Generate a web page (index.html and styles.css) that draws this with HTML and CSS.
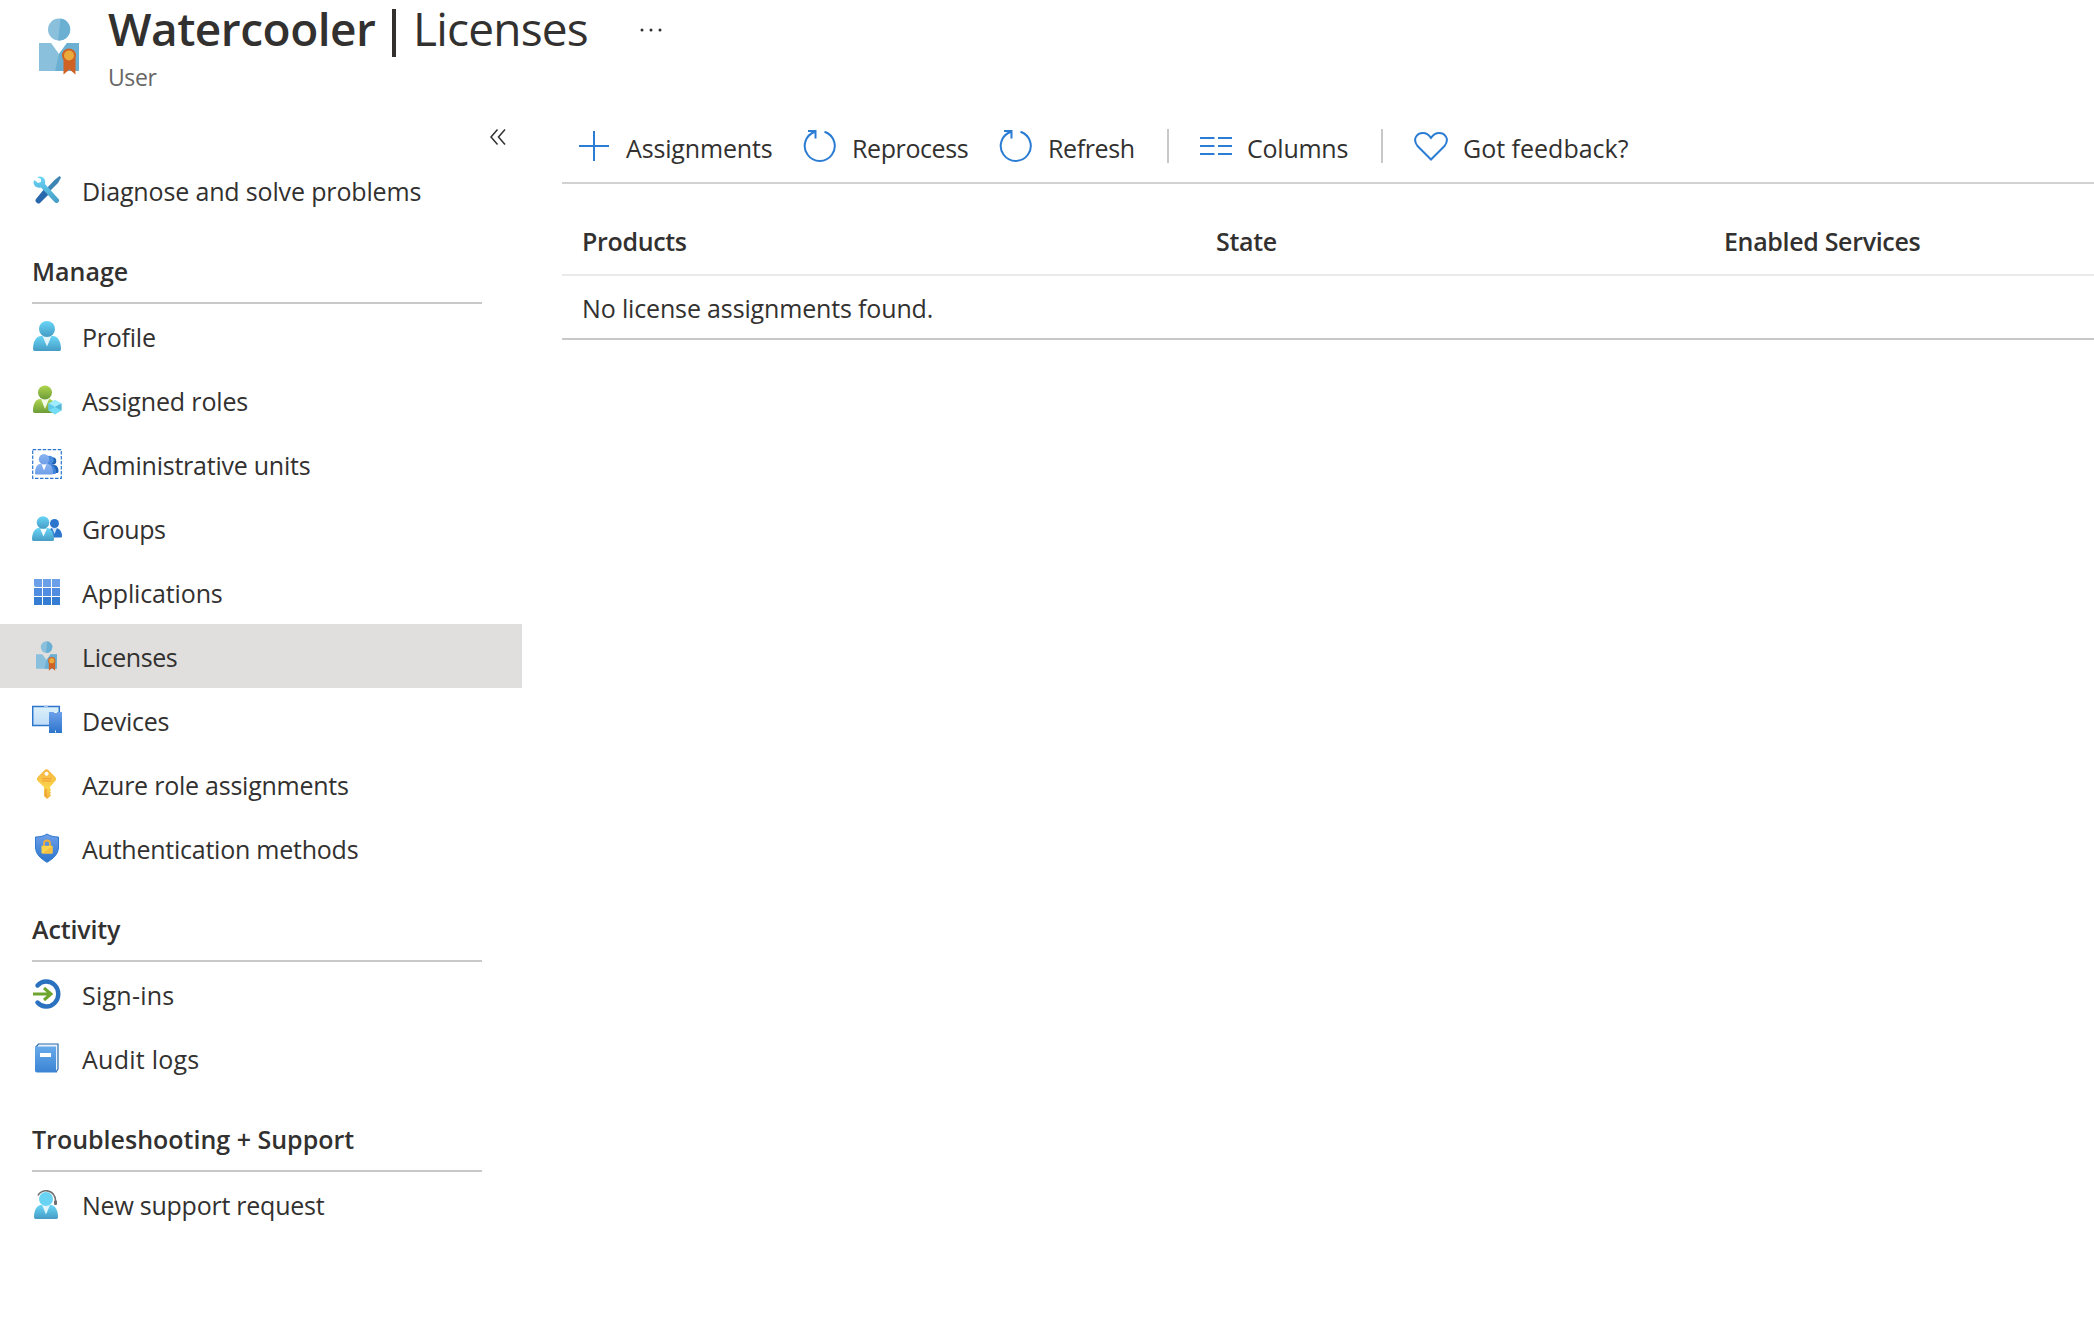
FILE: index.html
```html
<!DOCTYPE html>
<html lang="en">
<head>
<meta charset="utf-8">
<title>Watercooler | Licenses</title>
<link rel="stylesheet" href="styles.css">
</head>
<body>
<svg class="defs" width="0" height="0">
  <defs>
    <linearGradient id="cyan" x1="0" y1="0" x2="0" y2="1"><stop offset="0" stop-color="#69d6f7"/><stop offset="1" stop-color="#459bc4"/></linearGradient>
    <linearGradient id="green" x1="0" y1="0" x2="0" y2="1"><stop offset="0" stop-color="#afd64f"/><stop offset="1" stop-color="#6c9b38"/></linearGradient>
    <linearGradient id="peri" x1="0" y1="0" x2="0" y2="1"><stop offset="0" stop-color="#8ab4f0"/><stop offset="1" stop-color="#6f9fe8"/></linearGradient>
    <linearGradient id="blue" x1="0" y1="0" x2="0" y2="1"><stop offset="0" stop-color="#6ea0ea"/><stop offset="1" stop-color="#2b75cc"/></linearGradient>
    <linearGradient id="book" x1="0" y1="0" x2="0" y2="1"><stop offset="0" stop-color="#68abeb"/><stop offset="1" stop-color="#3a84d4"/></linearGradient>
    <linearGradient id="gold" x1="0" y1="0" x2="0" y2="1"><stop offset="0" stop-color="#f5b23e"/><stop offset=".6" stop-color="#fad44c"/><stop offset="1" stop-color="#f2ae3c"/></linearGradient>
    <linearGradient id="screen" x1="0" y1="0" x2="0" y2="1"><stop offset="0" stop-color="#dcf1fa"/><stop offset="1" stop-color="#bfdcf7"/></linearGradient>
    <symbol id="license" viewBox="0 0 40 57">
      <ellipse cx="20" cy="11.500" rx="11" ry="11" fill="#8ac0dc"/>
      <path d="M21.500 .6a11 11 0 0 1-2.500 21.900z" fill="#6bb0d3"/>
      <path d="M0 25h12l8 11 8-11h12v28H0z" fill="#8ac0dc"/>
      <path d="M20 36l8-11h12v28H16z" fill="#6bb0d3"/>
      <path d="M24.500 40h12v16.500l-6-5-6 5z" fill="#cf6225"/>
      <circle cx="30" cy="37.500" r="7" fill="#cf6225"/><circle cx="30" cy="37.500" r="5" fill="#ebaa3c"/>
    </symbol>
  </defs>
</svg>
<header class="header">
  <svg class="header-icon" width="40" height="57"><use href="#license"/></svg>
  <div class="titles">
    <h1 class="title"><span class="name">Watercooler</span><span class="bar"></span><span class="page">Licenses</span>
      <svg class="dots" width="24" height="6" viewBox="0 0 24 6"><circle cx="3" cy="3" r="1.500"/><circle cx="12" cy="3" r="1.500"/><circle cx="21" cy="3" r="1.500"/></svg></h1>
    <div class="kind"><span>User</span></div>
  </div>
</header>
<div class="body">
  <nav class="sidebar">
    <div class="collapse"><svg width="18" height="18" viewBox="0 0 18 18"><path d="M8.500 1.500L2 9l6.500 7.500M16 1.500L9.500 9l6.500 7.500"/></svg></div>
    <a class="item snug"><svg class="icon" viewBox="0 0 30 30">
      <path d="M27.500 1L29 2.500 26 8l-9 9-3-3 8.500-9z" fill="#3d85b5"/><path d="M13 13l5 5L8 28c-2 2-6-2-4-4z" fill="#2867ab"/>
      <path d="M5 2l3-.5c4 0 6 4 5 7.500l14 15.500c1 2-1.500 4.500-4 3L9 12.500C5 13.500 1.500 11 1.500 7L2.500 5l3.500 3 3-1V4z" fill="url(#cyan)"/></svg><span>Diagnose and solve problems</span></a>
    <h2 class="group"><span>Manage</span></h2>
    <a class="item tight"><svg class="icon" viewBox="0 0 30 30">
      <path d="M1 28c0-7 3-13 8-13h12c5 0 8 6 8 13 0 1.500-1 2-2 2H3c-1 0-2-.5-2-2z" fill="url(#cyan)"/><path d="M10.500 15h9L15 25.500z" fill="#e5f5fc"/><circle cx="15" cy="8" r="8" fill="url(#cyan)"/></svg><span>Profile</span></a>
    <a class="item snug"><svg class="icon" viewBox="0 0 30 30">
      <path d="M1 26c0-7 2.500-12 7-12h9c4 0 7 5 7 12 0 1-.5 2-2 2H3c-1.500 0-2-1-2-2z" fill="url(#green)"/><path d="M9 14h8l-4 10z" fill="#f4fae8"/><circle cx="13" cy="7.500" r="7" fill="url(#green)"/>
      <path d="M23 15l6.500 3.500v7L23 29.500l-6.500-4v-7z" fill="#74dcf5"/><path d="M16.500 18.500L23 15l6.500 3.500L23 22z" fill="#9eebfb"/><path d="M23 22l6.500-3.500v7z" fill="#55b7d8"/><path d="M16.500 18.500v7L23 22z" fill="#5fc8e6"/></svg><span>Assigned roles</span></a>
    <a class="item tight"><svg class="icon" viewBox="0 0 30 30">
      <rect x=".7" y=".7" width="28.600" height="28.600" fill="none" stroke="#2b75cc" stroke-width="1.200" stroke-dasharray="3.500 1.500"/>
      <path d="M13 24c0-5 2-8 5-8h4c3 0 4.500 3 4.500 6 0 1.500-.5 2-1.500 2z" fill="#1f63b5"/><circle cx="20.500" cy="12" r="3.800" fill="#1f63b5"/>
      <path d="M9 25c0-6 2-10 5-10h4c3 0 6 4 6 8 0 1.500-.5 2-1.500 2z" fill="#3f83da"/><circle cx="17.500" cy="11" r="4.300" fill="#4a8cde"/>
      <path d="M3 24c0-5 2-9 5-9h8c3 0 5 4 5 9 0 1-.5 1.500-1.500 1.500h-15C3.500 25.500 3 25 3 24z" fill="url(#peri)"/><path d="M9.500 15h5L12 21.500z" fill="#fff"/><circle cx="12" cy="10.200" r="5.200" fill="url(#peri)"/></svg><span>Administrative units</span></a>
    <a class="item tighter"><svg class="icon" viewBox="0 0 30 30">
      <path d="M16 24c0-5 2-9 4-9h4c3.500 0 6 4 6 8 0 1-.5 1.500-1.500 1.500H17z" fill="#2b75cc"/><path d="M20 15h5l-2.500 6z" fill="#cfe3f7"/><circle cx="22.500" cy="10.500" r="4.500" fill="#2b75cc"/>
      <path d="M0 26c0-6 3-11 6.500-11h9C19 15 22 20 22 26c0 1.500-.5 2-2 2H2c-1.500 0-2-.5-2-2z" fill="url(#cyan)"/><path d="M8 15.500h7l-3.500 8z" fill="#f1fafd"/><circle cx="11" cy="9.500" r="6.300" fill="url(#cyan)"/></svg><span>Groups</span></a>
    <a class="item snug"><svg class="icon" viewBox="0 0 30 30">
      <g fill="#6b9fe8"><path d="M2 2h8v8H4a2 2 0 0 1-2-2z"/><rect x="11" y="2" width="8" height="8"/><rect x="20" y="2" width="8" height="8"/></g>
      <g fill="#508de0"><rect x="2" y="11" width="8" height="8"/><rect x="11" y="11" width="8" height="8"/><rect x="20" y="11" width="8" height="8"/></g>
      <g fill="#347dd2"><rect x="2" y="20" width="8" height="8"/><rect x="11" y="20" width="8" height="8"/><rect x="20" y="20" width="8" height="8"/></g></svg><span>Applications</span></a>
    <a class="item tighter selected"><svg class="icon" viewBox="0 0 30 30"><use href="#license" x="4" y="0" width="21" height="30"/></svg><span>Licenses</span></a>
    <a class="item tight"><svg class="icon" viewBox="0 0 30 30">
      <rect x="0.700" y="1.500" width="26.600" height="19" fill="url(#screen)" stroke="#2b75cc" stroke-width="1.500"/><path d="M12 1.500h4" stroke="#9cc4ee" stroke-width="1.500"/>
      <rect x="17" y="7" width="13" height="21" fill="url(#blue)"/><path d="M22 7.500h3M23.500 25.500v2" stroke="#e5f0fc" stroke-width="1"/></svg><span>Devices</span></a>
    <a class="item tight"><svg class="icon" viewBox="0 0 30 30">
      <path fill-rule="evenodd" d="M13 .8q1.500-1.200 3 0l7.500 7.400q1.200 1.800 0 3.600L18 18v1.500l1 1-1 1.500 1 1.500-1 1.500 1 1.500L15 30l-3-3V18L5.500 11.800q-1.200-1.800 0-3.600zM14.500 2.800a2 2 0 1 0 .1 0z" fill="url(#gold)"/><path d="M10 9.700h9.500M10 12h9.500" stroke="#f19b35" stroke-width="1"/><path d="M13 20v7l1.500 1v-8z" fill="#ef9f38"/></svg><span>Azure role assignments</span></a>
    <a class="item tight"><svg class="icon" viewBox="0 0 30 30">
      <path d="M15 1c3 2 6.500 3 11.500 3v10c0 7-5 11.500-11.500 15.300C8.500 25.500 3.500 21 3.500 14V4C8.500 4 12 3 15 1z" fill="url(#blue)" stroke="#2f79cf" stroke-width="1"/>
      <path d="M12 13V10.500a3 3 0 0 1 6 0V13" fill="none" stroke="#eead3a" stroke-width="1.800"/><rect x="9.500" y="12.800" width="11" height="7.700" rx=".7" fill="#fbd44c"/><path d="M20.500 13v7.500h-10z" fill="#f6bf43"/></svg><span>Authentication methods</span></a>
    <h2 class="group snug"><span>Activity</span></h2>
    <a class="item loose"><svg class="icon" viewBox="0 0 30 30">
      <path d="M5.500 6.500A12 12.500 0 1 1 5.500 23.500" fill="none" stroke="#2a72c0" stroke-width="4.400" stroke-linecap="round"/>
      <path d="M1 15h17M12 9l7 6-7 6" fill="none" stroke="#6ea52e" stroke-width="3"/></svg><span>Sign-ins</span></a>
    <a class="item loose"><svg class="icon" viewBox="0 0 30 30">
      <path d="M4 4L6.500 1H26v25l-2 3z" fill="#e8f3fc" stroke="#2c6ca8" stroke-width="1.200"/><path d="M3 3.500h21V28q0 1.500-1.500 1.500H5q-2 0-2-2z" fill="url(#book)"/><rect x="8" y="10" width="11" height="4" fill="#fff"/></svg><span>Audit logs</span></a>
    <h2 class="group"><span>Troubleshooting + Support</span></h2>
    <a class="item tight"><svg class="icon" viewBox="0 0 30 30">
      <path d="M2 28c0-7 3-12 7-12h10c4 0 7 5 7 12 0 1.500-1 2-2 2H4c-1 0-2-.5-2-2z" fill="url(#cyan)"/><path d="M10 16h8l-4 9.500z" fill="#e0f5fc"/><circle cx="14" cy="10" r="7" fill="#68d3f2"/>
      <path d="M6 6.500C8 .5 23-2 23.800 13" fill="none" stroke="#6f6f73" stroke-width="1.600"/><rect x="22" y="11.500" width="3" height="4.500" rx="1" fill="#6f6f73"/></svg><span>New support request</span></a>
  </nav>
  <main class="content">
    <div class="toolbar">
      <a class="cmd assign snug"><svg width="32" height="34" viewBox="0 0 32 34"><path d="M1 17h30M16 2v30"/></svg><span>Assignments</span></a>
      <a class="cmd reprocess tighter"><svg width="34" height="34" viewBox="0 0 34 34"><path d="M21.500 2.700A15 15 0 1 1 12 2.700M5 2h7.500v7.500"/></svg><span>Reprocess</span></a>
      <a class="cmd refresh tighter"><svg width="34" height="34" viewBox="0 0 34 34"><path d="M21.500 2.700A15 15 0 1 1 12 2.700M5 2h7.500v7.500"/></svg><span>Refresh</span></a>
      <i class="sep"></i>
      <a class="cmd columns tight"><svg width="32" height="34" viewBox="0 0 32 34"><path d="M0 9h14.500M18 9h14M0 17h14.500M18 17h14M0 25h14.500M18 25h14"/></svg><span>Columns</span></a>
      <i class="sep"></i>
      <a class="cmd"><svg width="34" height="34" viewBox="0 0 34 34"><path d="M17 30.500L3.500 17C-2 10 3 4 9 4c4 0 6 2 8 4.800C19 6 21 4 25 4c6 0 11 6 5.500 13z"/></svg><span>Got feedback?</span></a>
    </div>
    <div class="table">
      <div class="row head"><span>Products</span><span>State</span><span>Enabled Services</span></div>
      <div class="row snug"><span>No license assignments found.</span></div>
    </div>
  </main>
</div>
</body>
</html>
```
FILE: styles.css
```css
* { box-sizing: border-box; }
body { margin: 0; background: #fff; color: #323130; font: 25px/34px "Open Sans", "Noto Sans", sans-serif; overflow: hidden; height: 1324px; }
.defs { position: absolute; }

/* letter fitting */
.snug { letter-spacing: -.15px; }
.tight { letter-spacing: -.24px; }
.tighter { letter-spacing: -.4px; }
.loose { letter-spacing: .25px; }

/* header */
.header { display: flex; height: 110px; padding-left: 39px; }
.header-icon { margin-top: 18px; }
.titles { margin-left: 29px; }
.title { display: grid; grid-template-columns: 284px 21px 226px 24px; align-items: center; height: 60px; margin: 0; font-size: 46px; font-weight: 400; line-height: 56px; }
.name, .page { padding-bottom: 4px; }
.name { font-weight: 600; letter-spacing: -.5px; }
.page { letter-spacing: -.8px; }
.bar { width: 4px; height: 48px; margin-top: 6px; background: #323130; }
.dots { fill: #323130; }
.kind { color: #666; font-size: 23px; letter-spacing: -.4px; }

/* sidebar */
.body { display: flex; }
.sidebar { width: 522px; flex: none; }
.collapse { display: flex; justify-content: flex-end; height: 48px; padding: 18px 15px 0 0; }
.collapse path { fill: none; stroke: #323130; stroke-width: 1.500; }
.item { display: flex; align-items: center; height: 64px; padding-left: 32px; }
.item span { margin-left: 20px; padding-top: 1px; }
.selected { background: #e1dfdd; }
.icon { width: 30px; height: 30px; flex: none; }
.group { display: flex; align-items: center; height: 82px; width: 450px; margin: 0 0 0 32px; padding-top: 17px; border-bottom: 2px solid #c8c8c8; font-size: 25px; font-weight: 600; }

/* content */
.content { flex: 1; margin-left: 40px; }
.toolbar { display: flex; align-items: center; height: 74px; padding-left: 16px; border-bottom: 2px solid #d2d2d2; }
.cmd { display: flex; align-items: center; }
.cmd svg { fill: none; stroke: #2b7cd3; stroke-width: 2; flex: none; }
.cmd span { padding-top: 3px; margin-left: 15px; }
.assign { width: 225px; }
.assign span { margin-left: 16px; }
.reprocess { width: 196px; }
.refresh { width: 168px; }
.columns { width: 181px; }
.sep { width: 2px; height: 34px; margin-right: 31px; background: #c8c8c8; }
.row { display: grid; grid-template-columns: 634px 508px 1fr; align-items: center; height: 64px; padding: 1px 0 0 20px; border-bottom: 2px solid #c8c8c8; }
.head { height: 92px; padding-top: 23px; border-color: #eaeaea; font-weight: 600; letter-spacing: -.33px; }
```
